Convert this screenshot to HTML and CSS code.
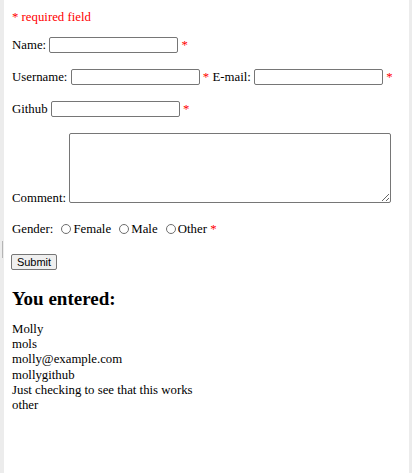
FILE: index.html
```html
<!DOCTYPE html>
<html>
<head>
<meta charset="utf-8">
<link rel="stylesheet" href="styles.css">
</head>
<body>
<div class="handle"></div>
<div class="page">
  <form class="form">
    <div class="line"><span class="error">* required field</span></div>
    <div class="row">Name: <input class="field" type="text"> <span class="error">*</span></div>
    <div class="row">Username: <input class="field" type="text"> <span class="error">*</span> E-mail: <input class="field" type="text"> <span class="error">*</span></div>
    <div class="row">Github <input class="field" type="text"> <span class="error">*</span></div>
    <div class="row comment"><span class="comment-label">Comment:</span><textarea class="area"></textarea></div>
    <div class="row">Gender: <input class="radio" type="radio" name="g">Female <input class="radio" type="radio" name="g">Male <input class="radio" type="radio" name="g">Other <span class="error">*</span></div>
    <div class="row"><button class="submit" type="button">Submit</button></div>
  </form>
  <h2 class="title">You entered:</h2>
  <div class="results">
    <div>Molly</div>
    <div>mols</div>
    <div>molly@example.com</div>
    <div>mollygithub</div>
    <div>Just checking to see that this works</div>
    <div>other</div>
  </div>
</div>
</body>
</html>
```
FILE: styles.css
```css
html {
  background: #ececec;
  height: 100%;
}
body {
  margin: 0;
  height: 100%;
  position: relative;
  font-family: "Liberation Serif", "Times New Roman", serif;
  font-size: 12.8px;
  color: #000;
}
.handle {
  position: absolute;
  left: 2px;
  top: 241px;
  width: 1px;
  height: 17px;
  background: #b5b5b5;
}
.page {
  background: #fff;
  margin: 0 3px 0 4px;
  min-height: 100%;
  box-sizing: border-box;
  padding: 9px 8px 0 8px;
}
.form {
  margin: 0;
}
.error {
  color: #ff0000;
}
.line {
  line-height: 16px;
  height: 16px;
}
.row {
  margin-top: 12px;
  height: 17px;
  line-height: 17px;
  white-space: nowrap;
}
.row + .row {
  margin-top: 15px;
}
.field {
  box-sizing: border-box;
  width: 129px;
  height: 16px;
  border: 1px solid #767676;
  border-radius: 2px;
  padding: 0 2px;
  margin: 0;
  vertical-align: top;
  font-size: 11px;
  background: #fff;
}
.row.comment {
  height: 73px;
  display: flex;
  align-items: flex-start;
  column-gap: 3px;
}
.comment-label {
  align-self: flex-end;
  line-height: 16px;
}
.area {
  box-sizing: border-box;
  width: 322px;
  height: 70px;
  border: 1px solid #767676;
  border-radius: 2px;
  margin: 0;
  padding: 2px;
  font-size: 11px;
}
.radio {
  appearance: none;
  -webkit-appearance: none;
  box-sizing: border-box;
  width: 10px;
  height: 10px;
  border: 1px solid #6e6e6e;
  border-radius: 50%;
  margin: 0 2px 0 5px;
  vertical-align: -1px;
  background: #fff;
}
.submit {
  box-sizing: border-box;
  margin: 1px 0 0 -1px;
  height: 16px;
  width: 46px;
  padding: 0;
  font-family: "Liberation Sans", Arial, sans-serif;
  font-size: 11px;
  line-height: 14px;
  color: #000;
  background: #efefef;
  border: 1px solid #767676;
  border-radius: 2px;
  vertical-align: top;
}
.title {
  margin: 17px 0 0 0;
  font-size: 19px;
  font-weight: bold;
  line-height: 23px;
}
.results {
  margin-top: 12px;
  line-height: 15.2px;
}
```
